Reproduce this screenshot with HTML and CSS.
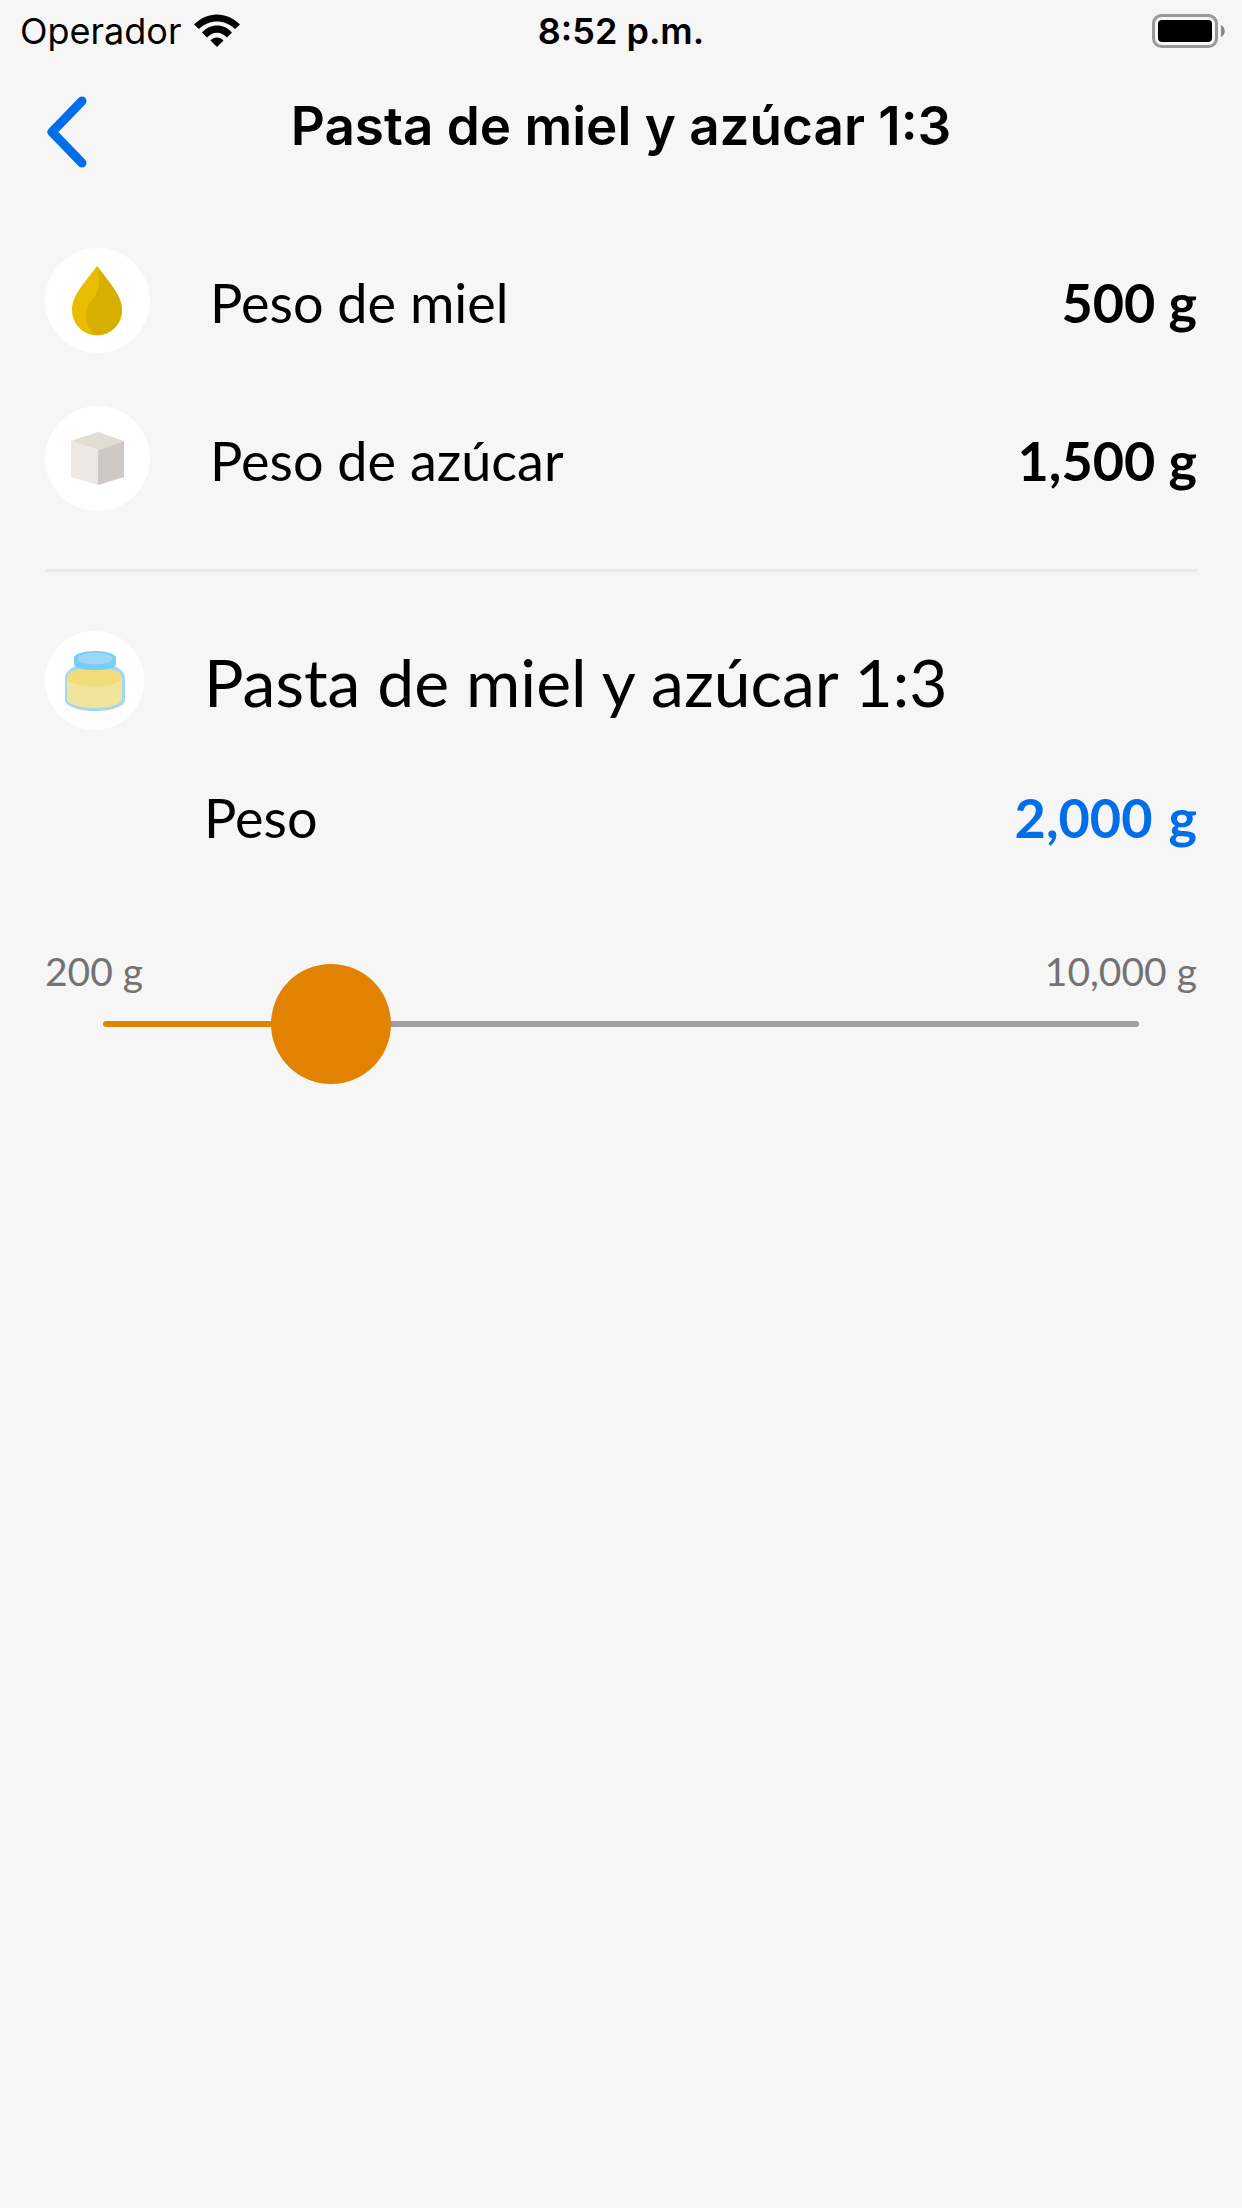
FILE: index.html
```html
<!DOCTYPE html>
<html lang="es">
<head>
  <meta charset="UTF-8">
  <meta name="viewport" content="width=device-width, initial-scale=1">
  <title>Pasta de miel y azúcar 1:3</title>
  <link rel="stylesheet" href="styles.css">
</head>
<body>
  <div class="status-bar">
    <div class="carrier">
      <span>Operador</span>
      <svg class="wifi" viewBox="0 0 46 34" aria-hidden="true">
        <path d="M0 10.5C13-3 33-3 46 10.5L41 15C31 5 15 5 5 15Z"/>
        <path d="M8 18.500C16 9 30 9 38 18.500L33 23.500C27 17 19 17 13 23.500Z"/>
        <path d="M16.500 26.500C20 22.500 26 22.500 29.500 26.500L23 33Z"/>
      </svg>
    </div>
    <div class="clock">8:52 p.m.</div>
    <svg class="battery" viewBox="0 0 74 34" aria-hidden="true">
      <rect x="1.500" y="1.500" width="63" height="31" rx="8" fill="none" stroke="#999" stroke-width="3"/>
      <rect x="6" y="6" width="54" height="22" rx="4"/>
      <path d="M69 11C74 13 74 21 69 23Z" fill="#888"/>
    </svg>
  </div>

  <header class="nav-bar">
    <button class="back" type="button" aria-label="Atrás">
      <svg viewBox="0 0 42 72" aria-hidden="true"><path d="M36 5L6 36L36 67"/></svg>
    </button>
    <h1>Pasta de miel y azúcar 1:3</h1>
  </header>

  <main>
    <section class="ingredients">
      <div class="row">
        <div class="icon">
          <svg viewBox="0 0 105 105" aria-hidden="true">
            <path fill="#e8bd00" d="M52 18C43 31 27 46 27 62a25 25.500 0 0 0 50 0C77 46 61 31 52 18Z"/>
            <path fill="#d7af00" d="M52 18C61 31 77 46 77 62C77 77 65 87 52 87C45 86 41 76 41 67C41 53 54 51 54 34C54 28 54 23 52 18Z"/>
          </svg>
        </div>
        <span class="name">Peso de miel</span>
        <span class="amount" id="honey">500 g</span>
      </div>
      <div class="row">
        <div class="icon">
          <svg viewBox="0 0 105 105" aria-hidden="true">
            <path fill="#e2dcd5" d="M53 26L79 35L53 44L26 35Z"/>
            <path fill="#ede8e4" d="M26 35L53 44V79L26 71Z"/>
            <path fill="#cfc9c5" d="M79 35L53 44V79L79 71Z"/>
          </svg>
        </div>
        <span class="name">Peso de azúcar</span>
        <span class="amount" id="sugar">1,500 g</span>
      </div>
    </section>

    <section class="result">
      <div class="icon small">
        <svg viewBox="0 0 99 99" aria-hidden="true">
          <path fill="#9fd8f8" d="M30 31V35C25 38 20 41 20 48V69C20 75 33 80 50 80S80 75 80 69V48C80 41 75 38 70 35V31Z"/>
          <path fill="#f2e59b" d="M22 46V68C22 73 34 77 50 77S77 73 77 68V46Z"/>
          <ellipse cx="49.500" cy="46" rx="27.500" ry="9.500" fill="#f2dc78"/>
          <path fill="#74cff6" d="M29 27C29 23 38 20 50 20S71 23 71 27V33C71 37 61 39 50 39S29 37 29 33Z"/>
          <ellipse cx="50" cy="27.500" rx="17.500" ry="6" fill="#9fd5f5"/>
        </svg>
      </div>
      <h2>Pasta de miel y azúcar 1:3</h2>
      <label class="name" for="weight">Peso</label>
      <div class="total"><output id="total" for="weight">2,000</output><span>g</span></div>
    </section>

    <section class="slider">
      <div class="limits"><span>200 g</span><span>10,000 g</span></div>
      <input type="range" id="weight" min="200" max="10000" step="100" value="2000" style="--fill: 22%">
    </section>
  </main>

  <script src="script.js"></script>
</body>
</html>
```

FILE: styles.css
```css
* {
  box-sizing: border-box;
}

body {
  margin: 0;
  min-height: 100vh;
  background: #f6f6f6;
  color: #000;
  font-family: Lato, sans-serif;
  font-size: 54px;
  line-height: 66px;
}

h1, h2 {
  margin: 0;
}

.status-bar {
  display: grid;
  grid-template-columns: 1fr auto 1fr;
  align-items: center;
  height: 60px;
  padding: 2px 16px 0;
  font-family: Inter, sans-serif;
  font-size: 36px;
  line-height: 44px;
}

.carrier {
  display: flex;
  align-items: center;
  gap: 12px;
  padding-left: 4px;
}

.wifi {
  width: 46px;
  height: 34px;
}

.clock {
  font-weight: 600;
}

.battery {
  width: 74px;
  height: 34px;
  justify-self: end;
}

.nav-bar {
  display: grid;
  grid-template-columns: 1fr auto 1fr;
  align-items: center;
  height: 132px;
  padding: 0 46px;
}

.nav-bar h1 {
  font-family: Inter, sans-serif;
  font-size: 53px;
  font-weight: 600;
}

.back {
  justify-self: start;
  padding: 12px 0 0;
  border: 0;
  background: none;
  line-height: 0;
  cursor: pointer;
}

.back svg {
  width: 42px;
  height: 72px;
  fill: none;
  stroke: #006ee9;
  stroke-width: 9;
  stroke-linecap: round;
  stroke-linejoin: round;
}

main {
  padding: 56px 45px;
}

.ingredients {
  display: flex;
  flex-direction: column;
  gap: 53px;
  padding-bottom: 58px;
  border-bottom: 3px solid #e8e8e8;
}

.row {
  display: flex;
  align-items: center;
  gap: 60px;
}

.row span {
  padding-top: 4px;
}

.icon {
  width: 105px;
  height: 105px;
  border-radius: 50%;
  background: #fff;
  line-height: 0;
}

.icon.small {
  width: 99px;
  height: 99px;
}

.amount {
  margin-left: auto;
  font-weight: 700;
}

.result {
  display: grid;
  grid-template-columns: auto 1fr auto;
  align-items: center;
  column-gap: 60px;
  row-gap: 55px;
  padding-top: 59px;
}

.result h2 {
  grid-column: 2 / 4;
  padding-top: 2px;
  font-size: 66px;
  font-weight: 400;
}

.result .name {
  grid-column: 2;
}

.total {
  display: flex;
  gap: 16px;
  color: #006ee9;
  font-weight: 700;
}

.slider {
  padding-top: 96px;
}

.limits {
  display: flex;
  justify-content: space-between;
  color: #737373;
  font-size: 39px;
  line-height: 48px;
}

.slider input {
  display: block;
  appearance: none;
  width: calc(100% - 116px);
  height: 120px;
  margin: -31px auto 0;
  background: none;
}

.slider input::-webkit-slider-runnable-track {
  height: 6px;
  border-radius: 3px;
  background: linear-gradient(to right, #e18200 var(--fill), #a0a0a0 var(--fill));
}

.slider input::-webkit-slider-thumb {
  appearance: none;
  width: 120px;
  height: 120px;
  margin-top: -57px;
  border-radius: 50%;
  background: #e18200;
}
```

FILE: script.js
```javascript
const weight = document.getElementById("weight");

// 1 part honey to 3 parts sugar
weight.addEventListener("input", () => {
  const total = Number(weight.value);
  const ratio = (total - weight.min) / (weight.max - weight.min);
  // the thumb is 120px wide, so its centre travels from 60px to 100% - 60px
  const center = 60 + ratio * (weight.offsetWidth - 120);
  const format = (n) => n.toLocaleString("en-US");

  document.getElementById("honey").textContent = format(total / 4) + " g";
  document.getElementById("sugar").textContent = format(total * 3 / 4) + " g";
  document.getElementById("total").textContent = format(total);
  weight.style.setProperty("--fill", center + "px");
});
```
